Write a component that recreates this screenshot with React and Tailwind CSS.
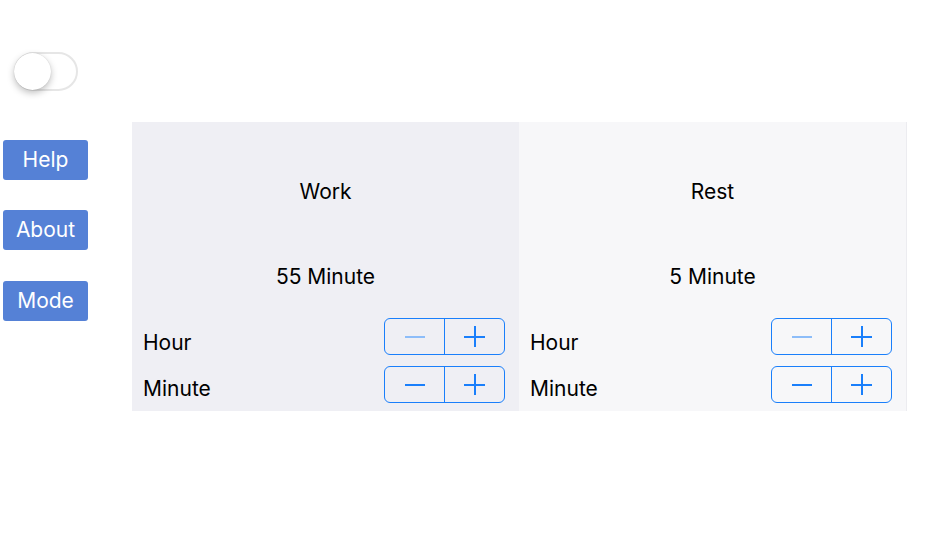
import React from "react";

function Stepper({ minusDisabled }) {
  return (
    <div className="flex h-[37px] w-[121px] rounded-[6px] border-[1.5px] border-[#1a7ffb]">
      <div className="flex flex-1 items-center justify-center border-r-[1.5px] border-[#1a7ffb]">
        <div className={"h-[2px] w-[20px] " + (minusDisabled ? "bg-[#8dbdf9]" : "bg-[#1a7ffb]")} />
      </div>
      <div className="relative flex flex-1 items-center justify-center">
        <div className="h-[2px] w-[21px] bg-[#1a7ffb]" />
        <div className="absolute h-[21px] w-[2px] bg-[#1a7ffb]" />
      </div>
    </div>
  );
}

function Half({ title, value, bg, extra }) {
  return (
    <div className={"flex h-full flex-col " + bg + " " + extra}>
      <div className="mt-[57px] h-[25px] text-center text-[21px] leading-[25px]">{title}</div>
      <div className="mt-[60px] h-[25px] text-center text-[21px] leading-[25px]">{value}</div>
      <div className="mt-[29px] flex h-[37px] items-center justify-between pl-[11px] pr-[14px]">
        <span className="pt-[11px] text-[21px] leading-[25px]">Hour</span>
        <Stepper minusDisabled />
      </div>
      <div className="mt-[11px] flex h-[37px] items-center justify-between pl-[11px] pr-[14px]">
        <span className="pt-[7px] text-[21px] leading-[25px]">Minute</span>
        <Stepper />
      </div>
    </div>
  );
}

export default function App() {
  const btn =
    "flex h-[40px] w-[85px] items-center justify-center rounded-[3px] bg-[#5581d6] text-[21px] text-white";
  return (
    <div
      className="h-[534px] w-[950px] bg-white text-black"
      style={{ fontFamily: "Inter, 'Noto Sans', sans-serif" }}
    >
      <div className="pl-[14px] pt-[52px]">
        <div className="relative h-[39px] w-[64px] rounded-full border-2 border-[#e6e6e6] bg-white">
          <div className="absolute left-[-2px] top-[-1px] h-[37px] w-[37px] rounded-full bg-white shadow-[0_3px_7px_rgba(0,0,0,0.25),0_0_1px_rgba(0,0,0,0.2)]" />
        </div>
      </div>
      <div className="mt-[31px] flex">
        <div className="flex w-[132px] flex-col gap-[30.5px] pl-[3px] pt-[17.5px]">
          <div className={btn}>Help</div>
          <div className={btn}>About</div>
          <div className={btn}>Mode</div>
        </div>
        <div className="flex h-[289px] w-[775px]">
          <div className="w-[387px]">
            <Half title="Work" value="55 Minute" bg="bg-[#efeff4]" extra="" />
          </div>
          <div className="w-[388px]">
            <Half title="Rest" value="5 Minute" bg="bg-[#f7f7f9]" extra="border-r border-[#ececf0]" />
          </div>
        </div>
      </div>
    </div>
  );
}
